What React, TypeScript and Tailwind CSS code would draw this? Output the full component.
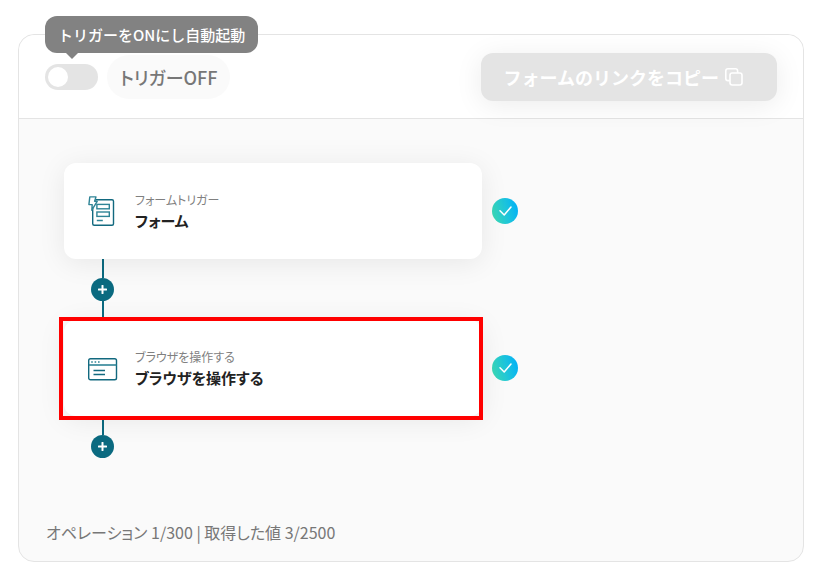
import { useState } from "react";
import type { ReactNode } from "react";

type StepCardProps = {
  category: string;
  title: string;
  icon: ReactNode;
  selected?: boolean;
};

function FormTriggerIcon() {
  return (
    <svg width="30" height="32" viewBox="0 0 30 32" fill="none" aria-hidden="true">
      <rect x="4.7" y="4.7" width="20.8" height="25.6" rx="1.5" stroke="#12697f" strokeWidth="1.4" />
      <path
        d="M1.8 1.9h6.2L6.6 6.3h2.6L3.8 15.2l0.4-5.6H0.9z"
        fill="white"
        stroke="#2f8496"
        strokeWidth="1.4"
        strokeLinejoin="round"
      />
      <rect x="8.9" y="9.4" width="12.4" height="4.4" stroke="#2f8496" strokeWidth="1.4" />
      <rect x="8.9" y="17" width="12.4" height="4.4" stroke="#2f8496" strokeWidth="1.4" />
      <path d="M8.8 25.5h6" stroke="#2f8496" strokeWidth="1.5" />
    </svg>
  );
}

function BrowserIcon() {
  return (
    <svg width="30" height="32" viewBox="0 0 30 32" fill="none" aria-hidden="true">
      <rect x="0.7" y="6.7" width="27.8" height="21" rx="1.8" stroke="#12697f" strokeWidth="1.4" />
      <path d="M1 13h27.5" stroke="#2f8496" strokeWidth="1.6" />
      <path d="M3.2 10h1.6M6.6 10h1.6M10 10h1.6" stroke="#2f8496" strokeWidth="1.6" />
      <path d="M5.5 18.5h11.5M5.5 22.5h11.5" stroke="#12697f" strokeWidth="1.4" />
    </svg>
  );
}

function CopyIcon() {
  return (
    <svg width="18" height="18" viewBox="0 0 18 18" fill="none" stroke="white" strokeWidth="1.6" aria-hidden="true">
      <rect x="5" y="5" width="12" height="12" rx="2.2" />
      <path d="M4.8 12.6H3A2.2 2.2 0 0 1 0.8 10.4V3A2.2 2.2 0 0 1 3 0.8h7.4A2.2 2.2 0 0 1 12.6 3v1.8" />
    </svg>
  );
}

function DoneBadge() {
  return (
    <span
      role="img"
      aria-label="完了"
      className="flex size-[26px] shrink-0 items-center justify-center rounded-full bg-linear-75 from-[#3fdcae] to-[#00adfb]"
    >
      <svg width="26" height="26" viewBox="0 0 26 26" fill="none" aria-hidden="true">
        <path d="M8 12.8l4.2 4.2 6.8-8" stroke="white" strokeWidth="1.5" strokeLinecap="round" strokeLinejoin="round" />
      </svg>
    </span>
  );
}

function StepCard({ category, title, icon, selected }: StepCardProps) {
  return (
    <div className="flex items-center gap-[10px]">
      <div className="relative flex h-24 w-full max-w-[418px] items-center gap-[17px] rounded-xl bg-white px-6 shadow-[0_4px_28px_rgba(0,0,0,0.08)]">
        {icon}
        <div className="[font-feature-settings:'palt']">
          <p className="text-xs leading-5 text-[#808080]">{category}</p>
          <p className="text-[15px] leading-[22px] font-bold text-[#222]">{title}</p>
        </div>
        {selected && (
          <div className="pointer-events-none absolute -top-[3px] -right-px -bottom-1 -left-[5px] border-4 border-[#f00]" />
        )}
      </div>
      <DoneBadge />
    </div>
  );
}

function Connector({ last }: { last?: boolean }) {
  return (
    <div className="ml-[27px] flex w-[23px] flex-col items-center">
      <span className="h-[19px] w-[2px] bg-[#0b6a80]" />
      <button
        type="button"
        aria-label="追加"
        className="flex size-[23px] items-center justify-center rounded-full bg-[#0b6a80]"
      >
        <svg width="9" height="9" viewBox="0 0 9 9" aria-hidden="true">
          <path d="M4.5 0.8v7.4M0.8 4.5h7.4" stroke="white" strokeWidth="2" strokeLinecap="round" />
        </svg>
      </button>
      {!last && <span className="h-[19px] w-[2px] bg-[#0b6a80]" />}
    </div>
  );
}

function TriggerToggle() {
  const [on, setOn] = useState(false);

  return (
    <div className="relative flex items-center gap-[9px]">
      <div
        role="tooltip"
        className="absolute bottom-full left-0 mb-[2px] rounded-xl bg-[#828282] px-[13px] text-[15px] leading-[37px] font-medium whitespace-nowrap text-white"
      >
        トリガーをONにし自動起動
        <span className="absolute top-full left-[21px] border-x-6 border-t-6 border-x-transparent border-t-[#828282]" />
      </div>
      <input
        id="trigger"
        type="checkbox"
        role="switch"
        checked={on}
        onChange={(e) => setOn(e.target.checked)}
        className="h-[26px] w-[53px] appearance-none rounded-full bg-[#e4e4e4] p-[3px] before:block before:size-5 before:rounded-full before:bg-white checked:bg-[#0b6a80] checked:before:ml-auto"
      />
      <label
        htmlFor="trigger"
        className="rounded-full bg-[#fafafa] px-[13px] text-lg leading-[44px] font-medium text-[#777] [font-feature-settings:'palt']"
      >
        トリガー{on ? "ON" : "OFF"}
      </label>
    </div>
  );
}

export default function App() {
  return (
    <div className="flex min-h-screen flex-col bg-white pt-[34px] pr-[9px] pb-[9px] pl-[18px] font-['Noto_Sans_CJK_JP',sans-serif]">
      <main className="flex flex-1 flex-col rounded-2xl border border-[#e4e4e4] bg-[#fafafa]">
        <header className="flex items-center justify-between rounded-t-2xl border-b border-[#e4e4e4] bg-white px-[26px] pt-[18px] pb-[17px]">
          <TriggerToggle />
          <button
            type="button"
            disabled
            className="flex h-12 items-center gap-[6px] rounded-xl bg-[#e4e4e4] pr-[34px] pl-[23px] text-lg font-bold text-white shadow-[0_4px_28px_rgba(0,0,0,0.08)]"
          >
            フォームのリンクをコピー
            <CopyIcon />
          </button>
        </header>

        <section className="flex flex-1 flex-col px-[45px] pt-11">
          <StepCard category="フォームトリガー" title="フォーム" icon={<FormTriggerIcon />} />
          <Connector />
          <StepCard category="ブラウザを操作する" title="ブラウザを操作する" icon={<BrowserIcon />} selected />
          <Connector last />
        </section>

        <footer className="px-[27px] pb-[17px] text-base leading-6 text-[#777] [font-feature-settings:'palt']">
          オペレーション 1/300 | 取得した値 3/2500
        </footer>
      </main>
    </div>
  );
}
